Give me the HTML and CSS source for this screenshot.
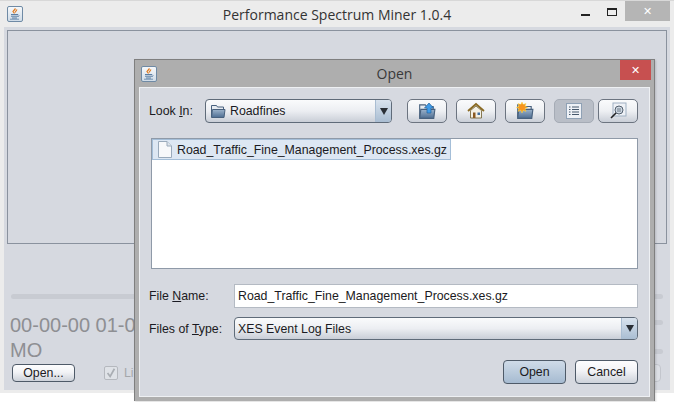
FILE: index.html
```html
<!DOCTYPE html>
<html lang="en">
<head>
  <meta charset="UTF-8">
  <title>Performance Spectrum Miner 1.0.4</title>
  <link rel="stylesheet" href="styles.css">
</head>
<body>

<svg class="defs" width="0" height="0">
  <defs>
    <linearGradient id="folderFill" x1="0" y1="0" x2="0" y2="1">
      <stop offset="0" stop-color="#9db4cc"/>
      <stop offset="1" stop-color="#4d6d92"/>
    </linearGradient>
    <linearGradient id="javaFill" x1="0" y1="0" x2="0" y2="1">
      <stop offset="0" stop-color="#f7f9fb"/>
      <stop offset="1" stop-color="#cfdbe7"/>
    </linearGradient>
  </defs>
  <symbol id="java" viewBox="0 0 16 16">
    <rect x="0.5" y="0.5" width="15" height="15" rx="1.5" fill="url(#javaFill)" stroke="#6f8aa5"/>
    <path d="M8.5 2.5L6 5.5 7.5 7.500M10 3.500L8 6.500" fill="none" stroke="#e07a1f" stroke-width="1.2"/>
    <path d="M4 8.500h7M4 10.200h7M5 12h5" stroke="#5b7ea3"/>
    <path d="M11 8.500q2 .8 0 2.500M3 13.200h9" fill="none" stroke="#5b7ea3" stroke-width=".8"/>
  </symbol>
  <symbol id="folder" viewBox="0 0 16 16">
    <path d="M1.500 14V2.500h5l1 1.500h6v3" fill="#e6ebf1" stroke="#48617e"/>
    <path d="M1.500 14.500l1-8h12.500l-1 8z" fill="url(#folderFill)" stroke="#48617e"/>
  </symbol>
</svg>

<div class="main-window">
  <div class="titlebar">
    <svg class="title-icon"><use href="#java"/></svg>
    <div class="title-text">Performance Spectrum Miner 1.0.4</div>
    <div class="win-controls">
      <span class="min-btn"></span>
      <span class="max-btn"></span>
      <span class="close-btn">✕</span>
    </div>
  </div>
  <div class="main-body">
    <div class="spectrum-panel"></div>
    <div class="slider"></div>
    <div class="lower">
      <div class="lower-left">
        <div class="timestamp">00-00-00 01-0<br>MO</div>
        <div class="main-actions">
          <button class="btn small-btn">Open...</button>
          <span class="fake-check">
            <svg viewBox="0 0 14 14"><path d="M3 7l3 4 5-9" fill="none" stroke="#a9adb3" stroke-width="2"/></svg>
          </span>
          <span class="check-label">Li</span>
        </div>
      </div>
      <div class="lower-right">
        <div class="mini-slider"></div>
        <div class="mini-slider"></div>
        <div class="ghost-btn"></div>
      </div>
    </div>
  </div>
</div>

<div class="dialog">
  <div class="dialog-title">
    <svg class="title-icon"><use href="#java"/></svg>
    <div class="dialog-title-text">Open</div>
    <span class="dialog-close">✕</span>
  </div>
  <div class="dialog-body">
    <div class="look-row">
      <label class="field-label look-label">Look <u>I</u>n:</label>
      <div class="combo look-combo">
        <svg class="combo-icon"><use href="#folder"/></svg>
        <span class="combo-text">Roadfines</span>
        <span class="combo-arrow"><i></i></span>
      </div>
      <div class="tools">
        <button class="tool">
          <svg viewBox="0 0 18 18"><use href="#folder"/><path d="M11 1L6.500 6H9v5h4V6h2.500z" fill="#3f9be8" stroke="#22619b" stroke-width=".7"/></svg>
        </button>
        <button class="tool">
          <svg viewBox="0 0 18 18"><path d="M1 9l8-7 8 7" fill="none" stroke="#8a6a23" stroke-width="1.8"/><path d="M3.500 8.500V16h11V8.500L9 4z" fill="#f4f1e6" stroke="#6b5a2c" stroke-width=".8"/><rect x="6" y="10.500" width="2.500" height="5.500" fill="#8a5a22"/><rect x="10.500" y="10.500" width="2.500" height="2.500" fill="#3f6d9e"/></svg>
        </button>
        <button class="tool">
          <svg viewBox="0 0 18 18"><use href="#folder"/><path d="M6 0l1.200 2.600L10 1.500 9 4.300l2.700 1.100-2.700 1.200 1 2.800-2.800-1.200L6 11 4.800 8.200 2 9.400l1-2.800L.4 5.400 3 4.300 2 1.500l2.800 1.100z" fill="#f7941d" stroke="#fbe04a" stroke-width=".5"/></svg>
        </button>
        <button class="tool tool-active">
          <svg viewBox="0 0 18 18"><rect x="1.500" y="1.500" width="15" height="15" fill="#eef1f6" stroke="#8fa1b5"/><path d="M4 5h1.500M7 5h7M4 7.500h1.500M7 7.500h7M4 10h1.500M7 10h7M4 12.500h1.500M7 12.500h7" stroke="#46586c"/></svg>
        </button>
        <button class="tool">
          <svg viewBox="0 0 18 18"><rect x="4" y="1" width="13" height="13" fill="#eef1f6" stroke="#9fb0c2"/><circle cx="10" cy="8" r="4" fill="#cfd9e3" stroke="#53606e"/><path d="M8 7h4M8 9h4" stroke="#53606e" stroke-width=".8"/><path d="M7 11l-5 5" stroke="#222" stroke-width="1.6"/></svg>
        </button>
      </div>
    </div>

    <div class="file-list">
      <div class="file-item">
        <svg class="file-icon" viewBox="0 0 14 17"><path d="M.5.5h8.500l4.500 4.500v11.500h-13z" fill="#f7f8fa" stroke="#9aaabb"/><path d="M9 .5V5h4.500" fill="#dde3ea" stroke="#9aaabb"/></svg>
        <span class="file-name">Road_Traffic_Fine_Management_Process.xes.gz</span>
      </div>
    </div>

    <div class="form-row name-row">
      <label class="field-label">File <u>N</u>ame:</label>
      <input class="name-input" type="text" value="Road_Traffic_Fine_Management_Process.xes.gz">
    </div>
    <div class="form-row type-row">
      <label class="field-label">Files of <u>T</u>ype:</label>
      <div class="combo type-combo">
        <span class="combo-text">XES Event Log Files</span>
        <span class="combo-arrow"><i></i></span>
      </div>
    </div>
    <div class="dialog-actions">
      <button class="btn action-btn btn-default">Open</button>
      <button class="btn action-btn">Cancel</button>
    </div>
  </div>
</div>

</body>
</html>
```

FILE: styles.css
```css
* {
  box-sizing: border-box;
}

html, body {
  margin: 0;
  height: 100%;
}

body {
  width: 674px;
  height: 402px;
  overflow: hidden;
  background: #fff;
  font-family: "Liberation Sans", Arial, sans-serif;
  font-size: 12.33px;
  color: #1a1a22;
  position: relative;
}

.defs {
  position: absolute;
}

.main-window {
  height: 393px;
  background: #ececec;
  border-top: 1px solid #d8d8d8;
  display: flex;
  flex-direction: column;
}

.titlebar {
  height: 26px;
  flex: none;
  display: flex;
  align-items: center;
  padding-left: 7px;
  position: relative;
}

.title-icon {
  width: 16px;
  height: 16px;
  flex: none;
}

.title-text {
  position: absolute;
  left: 0;
  right: 0;
  text-align: center;
  font-family: "Open Sans", sans-serif;
  font-size: 14px;
  color: #333;
}

.win-controls {
  position: absolute;
  right: 4px;
  top: 0;
  display: flex;
  align-items: flex-start;
}

.min-btn {
  width: 9px;
  height: 2px;
  background: #222;
  margin: 13px 17px 0 0;
}

.max-btn {
  width: 10px;
  height: 8px;
  border: 1px solid #222;
  border-top-width: 2px;
  margin: 7px 8px 0 0;
}

.close-btn {
  width: 45px;
  height: 20px;
  background: #b5b5b5;
  color: #fff;
  font-size: 11px;
  line-height: 20px;
  text-align: center;
}

.main-body {
  flex: 1;
  margin: 0 4px 3px 4px;
  background: #d6d9e0;
  padding: 3px 3px 0 3px;
}

.spectrum-panel {
  height: 214px;
  border: 1px solid #8a929e;
  background: #d6d9e0;
}

.slider {
  height: 5px;
  margin: 50px 4px 0 4px;
  border-radius: 3px;
  background: #c8cbd2;
}

.lower {
  display: flex;
  justify-content: space-between;
}

.timestamp {
  margin: 14px 0 1px 3px;
  font-size: 20px;
  line-height: 25px;
  color: #8e8f93;
  white-space: nowrap;
}

.main-actions {
  display: flex;
  align-items: center;
  margin-left: 5px;
}

.lower-right {
  width: 60px;
  margin-right: 4px;
  padding-top: 21px;
}

.mini-slider {
  height: 5px;
  margin-bottom: 24px;
  border-radius: 3px;
  background: #c8cbd2;
}

.ghost-btn {
  height: 18px;
  margin-top: -14px;
  margin-right: 2px;
  border: 1px solid #c3c6cd;
  border-radius: 4px;
  background: #dcdfe5;
}

.small-btn {
  width: 63px;
  height: 18px;
  font-size: 12.33px;
}

.fake-check {
  width: 14px;
  height: 14px;
  margin-left: 29px;
  border: 1px solid #b5b8be;
  border-radius: 2px;
  background: #dfe2e7;
  display: flex;
}

.check-label {
  margin-left: 6px;
  color: #a5a7ab;
}

.btn {
  font-family: "Liberation Sans", Arial, sans-serif;
  color: #1a1a22;
  border: 1px solid #4e5a68;
  border-radius: 4px;
  padding: 0;
  background: linear-gradient(#fdfdfe, #f2f3f6 45%, #cdd2da);
}

/* the file chooser */
.dialog {
  position: absolute;
  left: 134px;
  top: 59px;
  width: 521px;
  height: 342px;
  background: #aeaeae;
  border: 1px solid #7f7f7f;
  border-bottom: 0;
  display: flex;
  flex-direction: column;
  box-shadow: 1px 1px 2px rgba(0, 0, 0, 0.15);
}

.dialog-title {
  height: 27px;
  flex: none;
  display: flex;
  align-items: center;
  padding-left: 6px;
  position: relative;
}

.dialog-title-text {
  position: absolute;
  left: 0;
  right: 0;
  text-align: center;
  font-family: "Open Sans", sans-serif;
  font-size: 14px;
  color: #3a3a3a;
}

.dialog-close {
  position: absolute;
  right: 3px;
  top: 0;
  width: 31px;
  height: 20px;
  background: #c75050;
  color: #fff;
  font-size: 11px;
  line-height: 20px;
  text-align: center;
}

.dialog-body {
  flex: 1;
  margin: 0 4px 4px 4px;
  background: #d6d9e0;
  border: 1px solid #eef0f3;
  padding: 11px 11px 0 9px;
  display: flex;
  flex-direction: column;
}

.look-row {
  display: flex;
  align-items: center;
  height: 24px;
}

.field-label {
  color: #1a1a22;
}

.look-label {
  width: 56px;
}

.combo {
  display: flex;
  align-items: center;
  border: 1px solid #5f6b79;
  border-radius: 4px;
  background: linear-gradient(#fafbfc, #eceef2 50%, #c9ced7);
  position: relative;
}

.look-combo {
  width: 187px;
  height: 24px;
}

.combo-icon {
  width: 16px;
  height: 16px;
  margin-left: 4px;
}

.combo-text {
  margin-left: 4px;
}

.type-combo .combo-text {
  margin-left: 3px;
}

.combo-arrow {
  position: absolute;
  right: 0;
  top: 0;
  bottom: 0;
  width: 16px;
  border-left: 1px solid #a9bdd2;
  border-radius: 0 3px 3px 0;
  background: linear-gradient(#d9e3ee, #a9bdd2);
  display: flex;
  align-items: center;
  justify-content: center;
}

.combo-arrow i {
  width: 0;
  height: 0;
  border-left: 4px solid transparent;
  border-right: 4px solid transparent;
  border-top: 7px solid #2a2f36;
}

.tools {
  display: flex;
  margin-left: 15px;
  gap: 9px;
}

.tool {
  width: 40px;
  height: 24px;
  border: 1px solid #6c7480;
  border-radius: 5px;
  padding: 0;
  background: linear-gradient(#fafbfc, #eef0f3 50%, #c9ced7);
  display: flex;
  align-items: center;
  justify-content: center;
}

.tool svg {
  width: 18px;
  height: 18px;
}

.tool-active {
  background: #b9bec7;
  border-color: #a5abb5;
  margin-right: -5px;
}

.file-list {
  height: 131px;
  margin: 15px 0 0 2px;
  border: 1px solid #8f9aa8;
  background: #fff;
}

.file-item {
  display: inline-flex;
  align-items: center;
  height: 21px;
  background: #dde7f3;
  border: 1px solid #a4bed8;
  padding-left: 5px;
  padding-right: 3px;
}

.file-icon {
  width: 14px;
  height: 17px;
  margin-right: 5px;
}

.form-row {
  display: flex;
  align-items: center;
}

.form-row .field-label {
  width: 85px;
  flex: none;
}

.name-row {
  margin-top: 15px;
}

.name-input {
  width: 404px;
  height: 24px;
  border: 1px solid #b4bac3;
  background: #fff;
  padding: 0 2px 0 3px;
  font-family: "Liberation Sans", Arial, sans-serif;
  font-size: 12.33px;
  color: #1a1a22;
  outline: none;
}

.type-row {
  margin-top: 9px;
}

.type-combo {
  width: 404px;
  height: 23px;
}

.dialog-actions {
  display: flex;
  justify-content: flex-end;
  gap: 9px;
  margin-top: 20px;
}

.action-btn {
  width: 63px;
  height: 24px;
  font-size: 12.33px;
}

.btn-default {
  background: linear-gradient(#cfdbe8, #a6bbd1);
}
```
